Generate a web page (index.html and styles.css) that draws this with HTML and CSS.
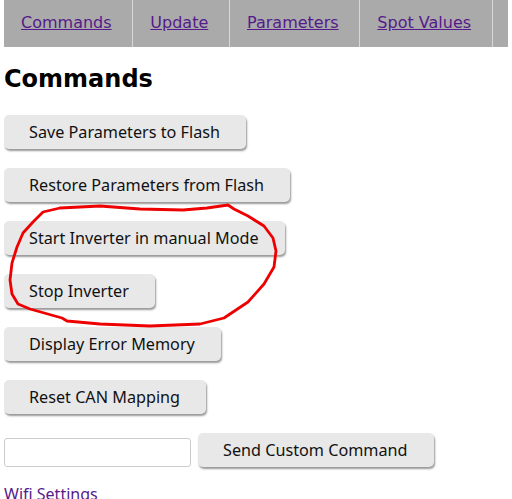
FILE: index.html
```html
<!DOCTYPE html>
<html lang="en">
<head>
    <meta charset="UTF-8">
    <meta name="viewport" content="width=device-width, initial-scale=1.0">
    <title>Inverter Commands</title>
    <link rel="stylesheet" href="styles.css">
</head>
<body>
    <ul class="nav">
        <li><a class="seen" href="#commands">Commands</a></li>
        <li><a class="seen" href="#update">Update</a></li>
        <li><a class="seen" href="#params">Parameters</a></li>
        <li><a class="seen" href="#spot">Spot Values</a></li>
        <li><a href="#plot">Plot</a></li>
        <li><a href="#log">Log</a></li>
    </ul>

    <h2>Commands</h2>

    <div class="commands">
        <button>Save Parameters to Flash</button>
        <button>Restore Parameters from Flash</button>
        <button>Start Inverter in manual Mode</button>
        <button>Stop Inverter</button>
        <button>Display Error Memory</button>
        <button>Reset CAN Mapping</button>
        <div class="custom">
            <input type="text" id="customCmd">
            <button>Send Custom Command</button>
        </div>
    </div>

    <a class="wifi" href="#wifi">Wifi Settings</a>

    <!-- hand drawn marker around start/stop -->
    <svg class="scribble" width="512" height="499" viewBox="0 0 512 499">
        <polyline points="60,208 100,206 140,209 183,210 207,208 228,205 234,209 248,216 264,226 273,238 276,251 274,267 264,284 248,302 224,318 200,324 150,326 100,324 67,321 62,318 30,309 18,304 12,294 10,280 12,263 17,247 23,233 33,222 43,212 60,208"/>
    </svg>
</body>
</html>
```

FILE: styles.css
```css
body {
    margin: 0 4px;
    font-family: "Noto Sans", sans-serif;
    font-size: 16px;
}

.nav {
    list-style: none;
    margin: 0 -4px 0 0;
    padding: 0;
    display: flex;
    overflow: hidden;
    background: #aaaaaa;
}

.nav li {
    flex-shrink: 0;
    border-right: 1px solid #d8d8d8;
}

.nav a {
    display: block;
    padding: 13px 20.75px 15px 17px;
    font-family: "DejaVu Sans", sans-serif;
    font-size: 16px;
    color: #0000ee;
}

.nav a.seen {
    color: #551a8b;
}

h2 {
    font-family: "DejaVu Sans", sans-serif;
    font-size: 24px;
    font-weight: bold;
    margin: 18px 0 22px;
}

.commands {
    display: flex;
    flex-direction: column;
    align-items: flex-start;
    gap: 19px;
}

button {
    font-family: "Noto Sans", sans-serif;
    font-size: 16.2px;
    line-height: 22px;
    color: #111;
    background: #e8e8e8;
    border: none;
    border-radius: 5px;
    padding: 6px 26px 6px 25px;
    box-shadow: 1px 2px 2px #999;
    cursor: pointer;
}

.custom {
    display: flex;
    align-items: flex-end;
    gap: 7px;
}

#customCmd {
    box-sizing: border-box;
    width: 187px;
    height: 29px;
    border: 1px solid #cccccc;
    border-radius: 3px;
    background: #fff;
}

.wifi {
    display: block;
    margin-top: 16px;
    color: #551a8b;
    text-decoration: none;
}

.scribble {
    position: absolute;
    top: 0;
    left: 0;
    pointer-events: none;
}

.scribble polyline {
    fill: none;
    stroke: #ee0000;
    stroke-width: 2.8;
    stroke-linejoin: round;
    stroke-linecap: round;
}
```
